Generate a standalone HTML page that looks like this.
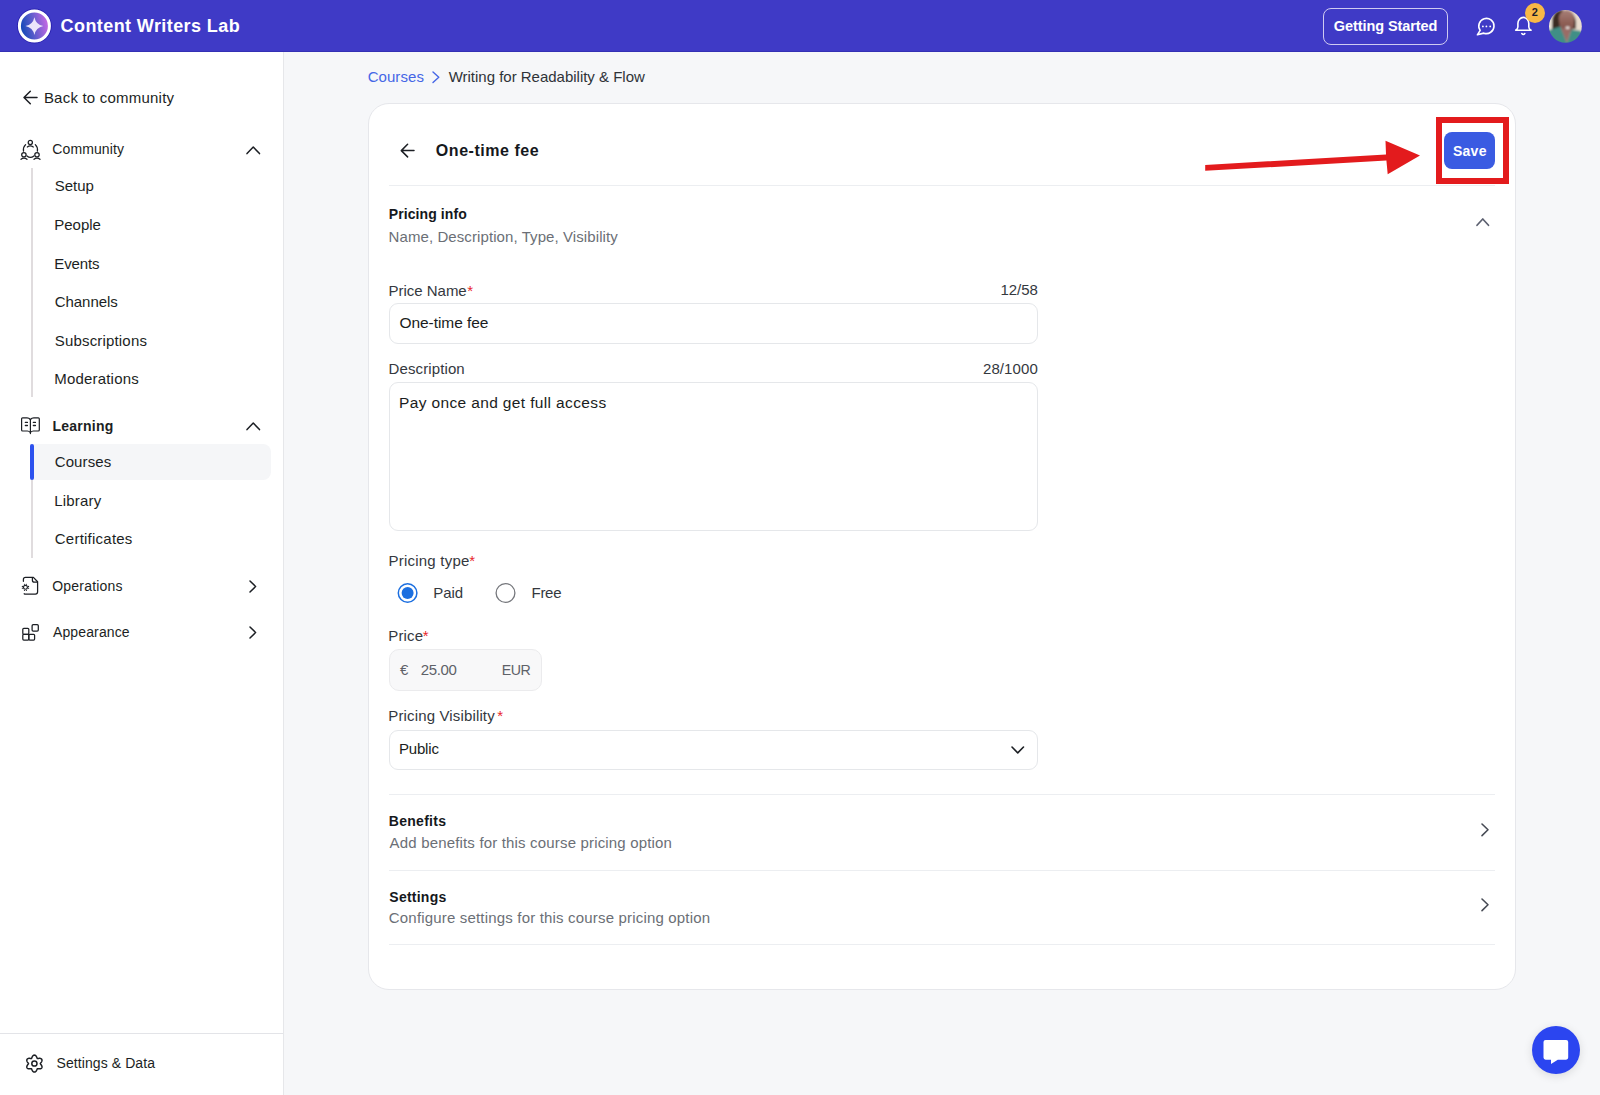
<!DOCTYPE html>
<html><head><meta charset="utf-8">
<style>
*{margin:0;padding:0;box-sizing:border-box}
html,body{width:1600px;height:1095px;overflow:hidden;font-family:"Liberation Sans",sans-serif;background:#f6f7f9;color:#1f2329}
.a{position:absolute;white-space:nowrap;line-height:1}
.b{position:absolute}
svg{position:absolute;overflow:visible}
</style></head><body>
<div class="b" style="left:0;top:0;width:1600px;height:52px;background:#3f3ac6"></div>
<div class="b" style="left:0;top:51px;width:1600px;height:1px;background:#3430b4"></div>
<svg style="left:0;top:0" width="60" height="52" viewBox="0 0 60 52">
<defs><linearGradient id="lg" x1="0" y1="0.6" x2="1" y2="0.4"><stop offset="0" stop-color="#0b47b5"/><stop offset="0.45" stop-color="#5c5ccc"/><stop offset="1" stop-color="#cf6ae6"/></linearGradient></defs>
<circle cx="34.4" cy="26" r="17" fill="none" stroke="#2a22b0" stroke-width="1"/>
<circle cx="34.4" cy="26" r="15" fill="url(#lg)" stroke="#fff" stroke-width="3"/>
<path d="M34.4 17.2 Q35.9 24.5 43.3 26.1 Q35.9 27.7 34.4 35 Q32.9 27.7 25.5 26.1 Q32.9 24.5 34.4 17.2Z" fill="#ebe6fa"/>
</svg>
<div class="a" style="top:16.91px;font-size:18px;color:#ffffff;font-weight:bold;letter-spacing:0.412px;left:60.58px;">Content Writers Lab</div>
<div class="b" style="left:1323px;top:8px;width:125px;height:37px;border:1.3px solid #cfcbf1;border-radius:8px"></div>
<div class="a" style="top:19.24px;font-size:14.5px;color:#ffffff;font-weight:bold;letter-spacing:-0.074px;left:1333.72px;">Getting Started</div>
<svg style="left:1470px;top:10px" width="30" height="30" viewBox="0 0 30 30">
<path d="M10.17 20.36 A7.6 7.6 0 1 1 13.8 23.14 L7.4 24.8 Z" fill="none" stroke="#fff" stroke-width="1.6" stroke-linejoin="round"/>
<circle cx="12.9" cy="16.4" r="0.9" fill="#fff"/><circle cx="16.4" cy="16.4" r="0.9" fill="#fff"/><circle cx="20.2" cy="16.4" r="0.9" fill="#fff"/>
</svg>
<svg style="left:1510px;top:10px" width="30" height="30" viewBox="0 0 30 30">
<path d="M7.9 13.6 A5.45 6.2 0 0 1 18.8 13.6 V17 Q18.9 19 21 20.3 H5.7 Q7.8 19 7.9 17 Z" fill="none" stroke="#fff" stroke-width="1.6" stroke-linejoin="round"/>
<path d="M11.8 23.6 Q13.3 25.5 14.8 23.6" fill="none" stroke="#fff" stroke-width="1.6" stroke-linecap="round"/>
</svg>
<div class="b" style="left:1524.6px;top:2.8px;width:20.6px;height:20.6px;border-radius:50%;background:#f8b846"></div>
<div class="a" style="left:1524.6px;top:6.7px;width:20.6px;text-align:center;font-size:11px;font-weight:bold;color:#1d1d2a">2</div>
<svg style="left:1549px;top:10px" width="33" height="33" viewBox="0 0 33 33">
<defs><clipPath id="av"><circle cx="16.4" cy="16.3" r="16.4"/></clipPath>
<linearGradient id="face" x1="0" y1="0" x2="0" y2="1"><stop offset="0" stop-color="#a88078"/><stop offset="0.6" stop-color="#8d5e55"/><stop offset="1" stop-color="#7a4c46"/></linearGradient>
<filter id="bl" x="-20%" y="-20%" width="140%" height="140%"><feGaussianBlur stdDeviation="0.9"/></filter></defs>
<g clip-path="url(#av)"><g filter="url(#bl)">
<rect x="-2" y="-2" width="37" height="37" fill="#e9dccf"/>
<rect x="-2" y="-2" width="7" height="37" fill="#efe7da"/>
<path d="M3 22 L3.3 8 Q5 0 14 -0.5 L14 20 Z" fill="#3b2a24"/>
<path d="M23 3 Q26 6 27 12 L26.8 19 L23.5 19 Z" fill="#3b2a24"/>
<path d="M9.9 8 Q11 0 17.5 0 Q25 0.5 25.2 9 L24.8 17 Q23 23 17 22.5 Q11 21.5 10.5 15 Z" fill="url(#face)"/>
<ellipse cx="18.6" cy="17.8" rx="2.2" ry="1.3" fill="#f2ebe8"/>
<path d="M-2 35 L-2 21 L1 19.7 L11.7 16.5 L17.9 32.5 L22.3 19.4 L31 20.8 L35 23 L35 35Z" fill="#3f8f86"/>
<path d="M11.7 17.9 L17.9 32.5 L22.3 19.4 Z" fill="#9a6c66"/>
</g></g></svg>
<div class="b" style="left:0;top:52px;width:283px;height:1043px;background:#fff"></div>
<div class="b" style="left:283px;top:52px;width:1px;height:1043px;background:#e6e7ea"></div>
<svg style="left:0;top:80px" width="45" height="30" viewBox="0 0 45 30">
<path d="M37 17.5 H24.5 M30.3 11.2 L24 17.5 L30.3 23.8" fill="none" stroke="#1c1f24" stroke-width="1.5" stroke-linecap="round" stroke-linejoin="round"/></svg>
<div class="a" style="top:90.01px;font-size:15px;color:#1c1f24;letter-spacing:0.216px;left:43.90px;">Back to community</div>
<svg style="left:16px;top:136px" width="30" height="28" viewBox="0 0 30 28">
<g fill="none" stroke="#1c1f24" stroke-width="1.25" stroke-linecap="round">
<path d="M9.6 8.6 A7.4 7.4 0 0 0 7.5 15.2"/>
<path d="M19.3 8.6 A7.4 7.4 0 0 1 21.4 15.2"/>
<path d="M11 20 Q14.4 22.8 17.9 20"/>
<circle cx="14.3" cy="6.5" r="2.1"/>
<path d="M11.3 11 Q14.3 8.8 17.3 11"/>
<circle cx="7.9" cy="18.7" r="2.2"/>
<path d="M5 23.3 Q7.9 20.8 11 23.3"/>
<circle cx="21" cy="18.7" r="2.2"/>
<path d="M18 23.3 Q21 20.8 24 23.3"/>
</g></svg>
<div class="a" style="top:142.38px;font-size:14px;color:#1c1f24;letter-spacing:0.107px;left:52.30px;">Community</div>
<svg style="left:244.55px;top:144.7px" width="16.5" height="10.6" viewBox="0 0 16.5 10.6"><path d="M2 8.6 L8.25 2 L14.5 8.6" fill="none" stroke="#1c1f24" stroke-width="1.5" stroke-linecap="round" stroke-linejoin="round"/></svg>
<div class="b" style="left:30.5px;top:168px;width:2px;height:229px;background:#e0dcde"></div>
<div class="a" style="top:178.01px;font-size:15px;color:#1c1f24;letter-spacing:-0.013px;left:54.75px;">Setup</div>
<div class="a" style="top:217.01px;font-size:15px;color:#1c1f24;letter-spacing:-0.030px;left:54.30px;">People</div>
<div class="a" style="top:255.81px;font-size:15px;color:#1c1f24;letter-spacing:-0.130px;left:54.30px;">Events</div>
<div class="a" style="top:294.11px;font-size:15px;color:#1c1f24;letter-spacing:-0.057px;left:54.75px;">Channels</div>
<div class="a" style="top:332.51px;font-size:15px;color:#1c1f24;letter-spacing:0.175px;left:54.75px;">Subscriptions</div>
<div class="a" style="top:370.81px;font-size:15px;color:#1c1f24;letter-spacing:0.185px;left:54.30px;">Moderations</div>
<svg style="left:16px;top:410px" width="30" height="30" viewBox="0 0 30 30">
<g fill="none" stroke="#1c1f24" stroke-width="1.2" stroke-linecap="round" stroke-linejoin="round">
<path d="M14.4 9.5 Q13 7.8 11 7.8 H6.6 Q5.6 7.8 5.6 8.8 V20 Q5.6 21 6.6 21 H11.4 Q13 21 14.4 22.4"/>
<path d="M14.4 9.5 Q15.8 7.8 17.8 7.8 H22.3 Q23.3 7.8 23.3 8.8 V20 Q23.3 21 22.3 21 H17.4 Q15.8 21 14.4 22.4"/>
<path d="M14.4 9.5 V23.6"/>
<path d="M9.4 12.4 H11.4 M9.4 15.5 H11.4 M17.4 12.4 H19.4 M17.4 15.5 H19.4" stroke-width="1.4"/>
</g></svg>
<div class="a" style="top:418.88px;font-size:14px;color:#1c1f24;font-weight:bold;letter-spacing:0.249px;left:52.42px;">Learning</div>
<svg style="left:244.55px;top:420.7px" width="16.5" height="10.6" viewBox="0 0 16.5 10.6"><path d="M2 8.6 L8.25 2 L14.5 8.6" fill="none" stroke="#1c1f24" stroke-width="1.5" stroke-linecap="round" stroke-linejoin="round"/></svg>
<div class="b" style="left:30.5px;top:478px;width:2px;height:79.5px;background:#e0dcde"></div>
<div class="b" style="left:30px;top:444px;width:241px;height:36px;background:#f5f6f8;border-radius:0 8px 8px 0"></div>
<div class="b" style="left:29.6px;top:444px;width:4px;height:36px;background:#2d52ee;border-radius:2px"></div>
<div class="a" style="top:454.11px;font-size:15px;color:#1c1f24;letter-spacing:0.100px;left:54.75px;">Courses</div>
<div class="a" style="top:492.81px;font-size:15px;color:#1c1f24;letter-spacing:0.183px;left:54.30px;">Library</div>
<div class="a" style="top:531.11px;font-size:15px;color:#1c1f24;letter-spacing:0.236px;left:54.75px;">Certificates</div>
<svg style="left:16px;top:570px" width="30" height="30" viewBox="0 0 30 30">
<g fill="none" stroke="#1c1f24" stroke-width="1.25" stroke-linecap="round" stroke-linejoin="round">
<path d="M7.4 11.3 V9.5 Q7.4 7.4 9.5 7.4 H17.4 L21.6 11.8 V21.8 Q21.6 24.1 19.4 24.1 H8.8 Q8.2 24.1 8.2 23.5"/>
<path d="M16.4 7.8 V10.2 Q16.4 12.2 18.4 12.2 H21.4"/>
</g>
<circle cx="9.45" cy="17.3" r="1.95" fill="none" stroke="#1c1f24" stroke-width="1.1"/>
<g fill="#1c1f24"><circle cx="8.50" cy="14.25" r="0.62"/><circle cx="10.40" cy="14.25" r="0.62"/><circle cx="6.40" cy="16.40" r="0.62"/><circle cx="12.55" cy="16.40" r="0.62"/><circle cx="6.40" cy="18.20" r="0.62"/><circle cx="12.55" cy="18.20" r="0.62"/><circle cx="8.50" cy="20.30" r="0.62"/><circle cx="10.40" cy="20.30" r="0.62"/></g>
</svg>
<div class="a" style="top:578.88px;font-size:14px;color:#1c1f24;letter-spacing:0.184px;left:52.30px;">Operations</div>
<svg style="left:248.0px;top:578.8px" width="9.6" height="15" viewBox="0 0 9.6 15"><path d="M2 2 L7.6 7.5 L2 13" fill="none" stroke="#1c1f24" stroke-width="1.5" stroke-linecap="round" stroke-linejoin="round"/></svg>
<svg style="left:16px;top:618px" width="30" height="30" viewBox="0 0 30 30">
<g fill="none" stroke="#1c1f24" stroke-width="1.25" stroke-linejoin="round">
<rect x="6.8" y="10.3" width="6" height="6" rx="1"/>
<rect x="6.8" y="16.3" width="6" height="5.8" rx="1"/>
<rect x="12.8" y="16.3" width="5.8" height="5.8" rx="1"/>
<rect x="16.1" y="6.6" width="6.2" height="6.4" rx="1.1"/>
</g></svg>
<div class="a" style="top:625.18px;font-size:14px;color:#1c1f24;letter-spacing:0.122px;left:53.00px;">Appearance</div>
<svg style="left:248.0px;top:624.8px" width="9.6" height="15" viewBox="0 0 9.6 15"><path d="M2 2 L7.6 7.5 L2 13" fill="none" stroke="#1c1f24" stroke-width="1.5" stroke-linecap="round" stroke-linejoin="round"/></svg>
<div class="b" style="left:0;top:1033px;width:283px;height:1px;background:#e3e4e8"></div>
<svg style="left:20px;top:1048px" width="30" height="30" viewBox="0 0 30 30">
<path d="M14.40 7.10 L14.77 7.14 L15.13 7.26 L15.47 7.46 L15.79 7.73 L16.07 8.05 L16.33 8.41 L16.55 8.80 L16.73 9.19 L16.89 9.58 L17.04 9.94 L17.18 10.26 L17.35 10.49 L17.64 10.52 L17.98 10.49 L18.37 10.43 L18.78 10.38 L19.22 10.34 L19.67 10.33 L20.10 10.37 L20.52 10.46 L20.91 10.60 L21.25 10.80 L21.54 11.05 L21.76 11.35 L21.91 11.69 L21.98 12.06 L21.98 12.46 L21.91 12.87 L21.78 13.27 L21.59 13.67 L21.37 14.06 L21.12 14.42 L20.86 14.75 L20.62 15.06 L20.42 15.34 L20.30 15.60 L20.42 15.86 L20.62 16.14 L20.86 16.45 L21.12 16.78 L21.37 17.14 L21.59 17.53 L21.78 17.93 L21.91 18.33 L21.98 18.74 L21.98 19.14 L21.91 19.51 L21.76 19.85 L21.54 20.15 L21.25 20.40 L20.91 20.60 L20.52 20.74 L20.10 20.83 L19.67 20.87 L19.22 20.86 L18.78 20.82 L18.37 20.77 L17.98 20.71 L17.64 20.68 L17.35 20.71 L17.18 20.94 L17.04 21.26 L16.89 21.62 L16.73 22.01 L16.55 22.40 L16.33 22.79 L16.07 23.15 L15.79 23.47 L15.47 23.74 L15.13 23.94 L14.77 24.06 L14.40 24.10 L14.03 24.06 L13.67 23.94 L13.33 23.74 L13.01 23.47 L12.73 23.15 L12.47 22.79 L12.25 22.40 L12.07 22.01 L11.91 21.62 L11.76 21.26 L11.62 20.94 L11.45 20.71 L11.16 20.68 L10.82 20.71 L10.43 20.77 L10.02 20.82 L9.58 20.86 L9.13 20.87 L8.70 20.83 L8.28 20.74 L7.89 20.60 L7.55 20.40 L7.26 20.15 L7.04 19.85 L6.89 19.51 L6.82 19.14 L6.82 18.74 L6.89 18.33 L7.02 17.93 L7.21 17.53 L7.43 17.14 L7.68 16.78 L7.94 16.45 L8.18 16.14 L8.38 15.86 L8.50 15.60 L8.38 15.34 L8.18 15.06 L7.94 14.75 L7.68 14.42 L7.43 14.06 L7.21 13.67 L7.02 13.27 L6.89 12.87 L6.82 12.46 L6.82 12.06 L6.89 11.69 L7.04 11.35 L7.26 11.05 L7.55 10.80 L7.89 10.60 L8.28 10.46 L8.70 10.37 L9.13 10.33 L9.58 10.34 L10.02 10.38 L10.43 10.43 L10.82 10.49 L11.16 10.52 L11.45 10.49 L11.62 10.26 L11.76 9.94 L11.91 9.58 L12.07 9.19 L12.25 8.80 L12.47 8.41 L12.73 8.05 L13.01 7.73 L13.33 7.46 L13.67 7.26 L14.03 7.14 L14.40 7.10Z" fill="none" stroke="#1c1f24" stroke-width="1.5" stroke-linejoin="round"/>
<circle cx="14.4" cy="15.5" r="2.6" fill="none" stroke="#1c1f24" stroke-width="1.5"/>
</svg>
<div class="a" style="top:1056.38px;font-size:14px;color:#1c1f24;letter-spacing:0.086px;left:56.50px;">Settings &amp; Data</div>
<div class="a" style="top:69.11px;font-size:15px;color:#4566e6;letter-spacing:0.067px;left:367.65px;">Courses</div>
<svg style="left:431.1px;top:69.95px" width="9.8" height="14.5" viewBox="0 0 9.8 14.5"><path d="M2 2 L7.8 7.25 L2 12.5" fill="none" stroke="#4566e6" stroke-width="1.4" stroke-linecap="round" stroke-linejoin="round"/></svg>
<div class="a" style="top:69.01px;font-size:15px;color:#2f3338;letter-spacing:-0.012px;left:448.70px;">Writing for Readability &amp; Flow</div>
<div class="b" style="left:368px;top:103px;width:1148px;height:887px;background:#fff;border:1px solid #e6e7eb;border-radius:21px"></div>
<svg style="left:396px;top:140px" width="24" height="22" viewBox="0 0 24 22">
<path d="M18 10.6 H5.6 M11.6 4.3 L5.3 10.6 L11.6 16.9" fill="none" stroke="#1c1f24" stroke-width="1.5" stroke-linecap="round" stroke-linejoin="round"/></svg>
<div class="a" style="top:142.64px;font-size:16px;color:#15181c;font-weight:bold;letter-spacing:0.538px;left:435.86px;">One-time fee</div>
<div class="b" style="left:389px;top:185px;width:1106px;height:1px;background:#eceef1"></div>
<svg style="left:0;top:0" width="1600" height="200" viewBox="0 0 1600 200">
<path d="M1205.2 164.9 L1386 154.6 L1385.5 140.8 L1420 155.5 L1387.7 174.25 L1386.4 160.6 L1205.2 170.8 Z" fill="#e31b1d"/>
</svg>
<div class="b" style="left:1435.5px;top:117px;width:73.6px;height:67.2px;border:6.5px solid #e31b1d"></div>
<div class="b" style="left:1444px;top:132.2px;width:51.1px;height:36.5px;background:#3a5be2;border-radius:8px"></div>
<div class="a" style="top:143.58px;font-size:14px;color:#ffffff;font-weight:bold;letter-spacing:0.307px;left:1452.88px;">Save</div>
<div class="a" style="top:207.28px;font-size:14px;color:#15181c;font-weight:bold;letter-spacing:0.095px;left:388.77px;">Pricing info</div>
<div class="a" style="top:228.71px;font-size:15px;color:#6b6f76;letter-spacing:0.088px;left:388.55px;">Name, Description, Type, Visibility</div>
<svg style="left:1475.25px;top:217.35px" width="15.5" height="10.3" viewBox="0 0 15.5 10.3"><path d="M2 8.3 L7.75 2 L13.5 8.3" fill="none" stroke="#5c6070" stroke-width="1.7" stroke-linecap="round" stroke-linejoin="round"/></svg>
<div class="a" style="top:282.51px;font-size:15px;color:#34383e;letter-spacing:-0.022px;left:388.55px;">Price Name</div>
<div class="a" style="top:282.51px;font-size:15px;color:#e8262c;left:467.20px;">*</div>
<div class="a" style="top:282.31px;font-size:15px;color:#34383e;letter-spacing:-0.062px;left:1000.55px;">12/58</div>
<div class="b" style="left:389.4px;top:303.3px;width:648.5px;height:40.4px;background:#fff;border:1px solid #e5e7ea;border-radius:9px"></div>
<div class="a" style="top:315.28px;font-size:15.5px;color:#1a1d21;letter-spacing:-0.067px;left:399.53px;">One-time fee</div>
<div class="a" style="top:360.71px;font-size:15px;color:#34383e;letter-spacing:0.110px;left:388.55px;">Description</div>
<div class="a" style="top:360.71px;font-size:15px;color:#34383e;letter-spacing:0.083px;left:983.00px;">28/1000</div>
<div class="b" style="left:389.2px;top:382.2px;width:648.8px;height:148.6px;background:#fff;border:1px solid #e5e7ea;border-radius:9px"></div>
<div class="a" style="top:394.58px;font-size:15.5px;color:#1a1d21;letter-spacing:0.366px;left:398.96px;">Pay once and get full access</div>
<div class="a" style="top:553.31px;font-size:15px;color:#34383e;letter-spacing:0.245px;left:388.40px;">Pricing type</div>
<div class="a" style="top:553.31px;font-size:15px;color:#e8262c;left:469.20px;">*</div>
<svg style="left:390px;top:575px" width="140" height="36" viewBox="0 0 140 36">
<circle cx="17.6" cy="18" r="9.3" fill="#fff" stroke="#1c6fe0" stroke-width="1.5"/>
<circle cx="17.6" cy="18" r="6" fill="#1c6fe0"/>
<circle cx="115.5" cy="18" r="9.4" fill="#fff" stroke="#75777c" stroke-width="1.3"/>
</svg>
<div class="a" style="top:585.01px;font-size:15px;color:#34383e;letter-spacing:-0.033px;left:433.20px;">Paid</div>
<div class="a" style="top:585.01px;font-size:15px;color:#34383e;letter-spacing:-0.317px;left:531.60px;">Free</div>
<div class="a" style="top:628.21px;font-size:15px;color:#34383e;letter-spacing:0.162px;left:388.30px;">Price</div>
<div class="a" style="top:628.21px;font-size:15px;color:#e8262c;left:422.70px;">*</div>
<div class="b" style="left:389px;top:649.2px;width:152.5px;height:41.7px;background:#f8f8f9;border:1px solid #ebebed;border-radius:10px"></div>
<div class="a" style="top:662.21px;font-size:15px;color:#5e6168;left:400.05px;">€</div>
<div class="a" style="top:662.21px;font-size:15px;color:#5e6168;letter-spacing:-0.400px;left:420.85px;">25.00</div>
<div class="a" style="top:662.90px;font-size:14.2px;color:#5e6168;letter-spacing:-0.508px;left:501.76px;">EUR</div>
<div class="a" style="top:707.81px;font-size:15px;color:#34383e;letter-spacing:0.144px;left:388.30px;">Pricing Visibility</div>
<div class="a" style="top:707.81px;font-size:15px;color:#e8262c;left:497.20px;">*</div>
<div class="b" style="left:389px;top:729.8px;width:649px;height:40.4px;background:#fff;border:1px solid #e5e7ea;border-radius:9px"></div>
<div class="a" style="top:741.41px;font-size:15px;color:#1a1d21;letter-spacing:-0.190px;left:399.00px;">Public</div>
<svg style="left:1010.25px;top:744.8499999999999px" width="15.5" height="9.9" viewBox="0 0 15.5 9.9"><path d="M2 2 L7.75 7.9 L13.5 2" fill="none" stroke="#1c1f24" stroke-width="1.6" stroke-linecap="round" stroke-linejoin="round"/></svg>
<div class="b" style="left:389px;top:794.35px;width:1106px;height:1px;background:#eceef1"></div>
<div class="b" style="left:389px;top:869.50px;width:1106px;height:1px;background:#eceef1"></div>
<div class="b" style="left:389px;top:944.40px;width:1106px;height:1px;background:#eceef1"></div>
<div class="a" style="top:814.48px;font-size:14px;color:#15181c;font-weight:bold;letter-spacing:0.291px;left:388.77px;">Benefits</div>
<div class="a" style="top:835.01px;font-size:15px;color:#6b6f76;letter-spacing:0.171px;left:389.60px;">Add benefits for this course pricing option</div>
<svg style="left:1480.1px;top:822.0px" width="10" height="15.6" viewBox="0 0 10 15.6"><path d="M2 2 L8 7.8 L2 13.6" fill="none" stroke="#474b55" stroke-width="1.6" stroke-linecap="round" stroke-linejoin="round"/></svg>
<div class="a" style="top:889.88px;font-size:14px;color:#15181c;font-weight:bold;letter-spacing:0.240px;left:389.33px;">Settings</div>
<div class="a" style="top:909.91px;font-size:15px;color:#6b6f76;letter-spacing:0.178px;left:388.85px;">Configure settings for this course pricing option</div>
<svg style="left:1480.1px;top:897.1px" width="10" height="15.6" viewBox="0 0 10 15.6"><path d="M2 2 L8 7.8 L2 13.6" fill="none" stroke="#474b55" stroke-width="1.6" stroke-linecap="round" stroke-linejoin="round"/></svg>
<div class="b" style="left:1531.5px;top:1026px;width:48.2px;height:48.2px;border-radius:50%;background:#2b45f0;box-shadow:0 2px 10px rgba(0,0,0,0.12)"></div>
<svg style="left:1530px;top:1025px" width="50" height="50" viewBox="0 0 50 50">
<path d="M15.6 14.9 H36.1 Q38.2 14.9 38.2 17 V32.6 Q38.2 34.7 36.1 34.7 H27.8 L21 39 V34.7 H15.6 Q13.5 34.7 13.5 32.6 V17 Q13.5 14.9 15.6 14.9Z" fill="#fff"/>
</svg>
</body></html>
